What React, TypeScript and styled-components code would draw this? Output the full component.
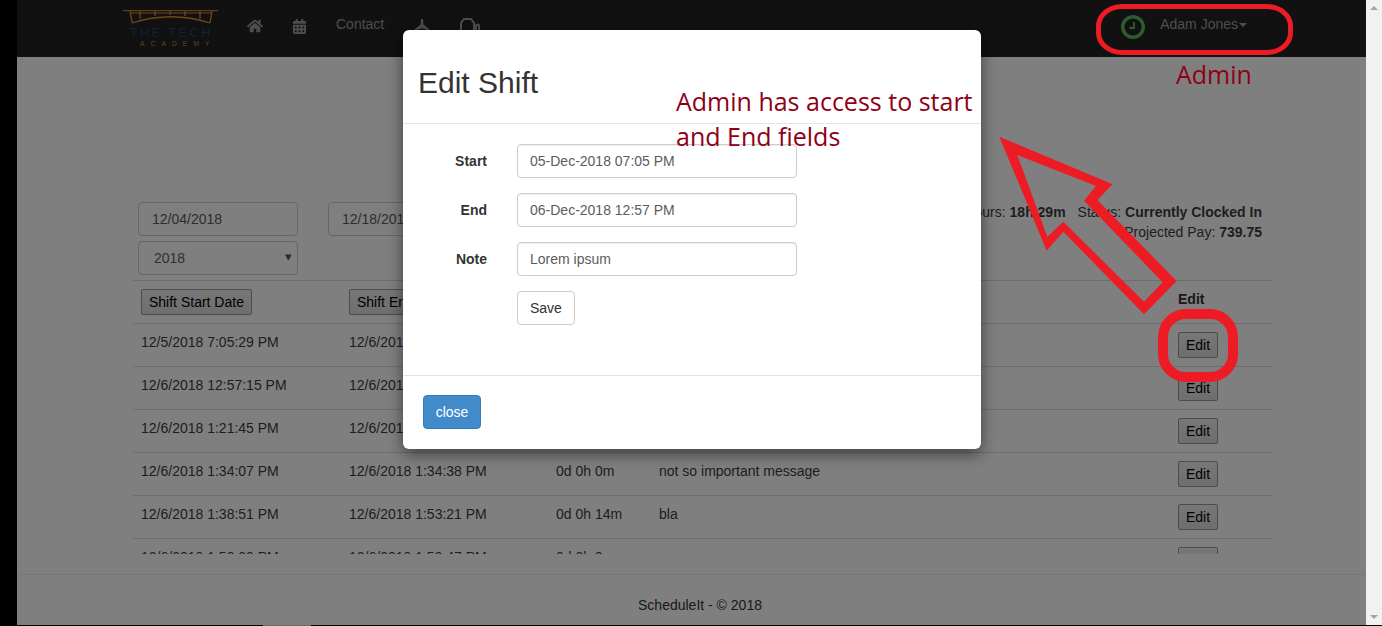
import React from 'react';
import styled, { createGlobalStyle } from 'styled-components';
import { FaHome, FaCalendarAlt } from 'react-icons/fa';

const GlobalStyle = createGlobalStyle`
  html, body {
    margin: 0;
    height: 626px;
    overflow: hidden;
    background: #000;
    font-family: "Liberation Sans", Arial, sans-serif;
    font-size: 14px;
    line-height: 20px;
    color: #333;
  }
  * { box-sizing: border-box; }
`;

const Shell = styled.div`
  display: flex;
  height: 625px;
  padding-left: 17px;
`;

const Page = styled.div`
  position: relative;
  flex: 1;
  display: flex;
  flex-direction: column;
  background: #fff;
  overflow: hidden;
`;

const Scrollbar = styled.div`
  width: 16px;
  display: flex;
  flex-direction: column;
  justify-content: space-between;
  align-items: center;
  padding: 6px 0;
  background: #f1f1f1;
`;

const ScrollArrow = styled.span<{ $down?: boolean }>`
  width: 0;
  height: 0;
  border-left: 4px solid transparent;
  border-right: 4px solid transparent;
  border-bottom: ${p => (p.$down ? '0' : '4px solid #a3a3a3')};
  border-top: ${p => (p.$down ? '4px solid #a3a3a3' : '0')};
`;

const BottomSliver = styled.div`
  position: absolute;
  left: 263px;
  top: 625px;
  width: 48px;
  height: 1px;
  background: #6b6b6b;
`;

const Navbar = styled.nav`
  height: 57px;
  flex: none;
  display: flex;
  align-items: flex-start;
  padding-left: 106px;
  background: #222;
  color: #9d9d9d;
`;

const Logo = styled.svg`
  width: 95px;
  height: 38px;
  margin: 10px 14px 0 0;
  flex: none;
`;

const NavLink = styled.a`
  display: flex;
  align-items: center;
  height: 20px;
  margin-top: 16px;
  padding: 0 15px;
  color: #9d9d9d;
`;

const CalendarLink = styled(NavLink)`
  padding: 0 14px;
`;

const NavText = styled(NavLink)`
  margin-top: 14px;
`;

const UserMenu = styled.div`
  display: flex;
  align-items: flex-start;
  margin-left: auto;
  padding: 14px 119px 0 0;
`;

const ClockIcon = styled.svg`
  width: 24px;
  height: 24px;
  margin: 1px 15px 0 0;
`;

const Caret = styled.span`
  display: inline-block;
  margin-left: 1px;
  vertical-align: middle;
  border-top: 4px solid #9d9d9d;
  border-left: 4px solid transparent;
  border-right: 4px solid transparent;
`;

const Main = styled.main`
  flex: 1;
  padding: 145px 93px 0 116px;
`;

const FilterBar = styled.div`
  display: flex;
  justify-content: space-between;
  height: 78px;
  padding: 0 11px 0 5px;
`;

const DateGrid = styled.div`
  display: grid;
  grid-template-columns: 160px 160px;
  grid-auto-rows: 34px;
  column-gap: 30px;
  row-gap: 5px;
`;

const DateInput = styled.input`
  width: 100%;
  height: 34px;
  padding: 6px 13px;
  border: 1px solid #ccc;
  border-radius: 4px;
  background: #fff;
  font: inherit;
  color: #5c5c5c;
`;

const SelectWrap = styled.div`
  position: relative;

  &::after {
    content: '▾';
    position: absolute;
    right: 6px;
    top: 6px;
    font-size: 13px;
    color: #555;
  }
`;

const YearSelect = styled.select`
  width: 100%;
  height: 34px;
  padding: 6px 15px;
  border: 1px solid #ccc;
  border-radius: 4px;
  background: #fff;
  font: inherit;
  color: #5c5c5c;
  appearance: none;
`;

const Stats = styled.div`
  text-align: right;
  color: #3d3d3d;
`;

const StatItem = styled.span`
  margin-left: 12px;
`;

const TableClip = styled.div`
  height: 274px;
  overflow: hidden;
`;

const ShiftTable = styled.table`
  width: 1140px;
  table-layout: fixed;
  border-collapse: collapse;
`;

const HeadCell = styled.th`
  padding: 8px;
  border-top: 1px solid #ddd;
  text-align: left;
  vertical-align: top;
`;

const Cell = styled.td`
  height: 43px;
  padding: 8px;
  border-top: 1px solid #ddd;
  vertical-align: top;
  color: #3d3d3d;
`;

const TableButton = styled.button`
  display: block;
  height: 26px;
  padding: 1px 7px;
  border: 1px solid #999;
  border-radius: 2px;
  background: linear-gradient(#efefef, #dcdcdc);
  font: inherit;
  font-weight: 400;
  color: #000;
  white-space: nowrap;
`;

const Footer = styled.footer`
  flex: none;
  height: 51px;
  padding: 20px 0 0 17px;
  border-top: 1px solid #eee;
  text-align: center;
`;

const Backdrop = styled.div`
  position: absolute;
  inset: 0;
  background: rgba(0, 0, 0, 0.5);
`;

const Modal = styled.div`
  position: absolute;
  left: 386px;
  top: 30px;
  width: 578px;
  height: 419px;
  background: #fff;
  border-radius: 6px;
  box-shadow: 0 5px 15px rgba(0, 0, 0, 0.5);
`;

const ModalHeader = styled.div`
  padding: 36px 15px 24px;
  border-bottom: 1px solid #e5e5e5;
`;

const ModalTitle = styled.h4`
  margin: 0;
  font-size: 30px;
  font-weight: 400;
  line-height: 33px;
`;

const ModalBody = styled.form`
  display: grid;
  grid-template-columns: 69px 280px;
  grid-auto-rows: 34px;
  column-gap: 30px;
  row-gap: 15px;
  padding: 20px 15px 50px;
`;

const FieldLabel = styled.label`
  font-weight: 700;
  line-height: 34px;
  text-align: right;
`;

const FieldInput = styled.input`
  width: 100%;
  height: 34px;
  padding: 6px 12px;
  border: 1px solid #ccc;
  border-radius: 4px;
  box-shadow: inset 0 1px 1px rgba(0, 0, 0, 0.075);
  font: inherit;
  color: #5c5c5c;
`;

const SaveButton = styled.button`
  grid-column: 2;
  justify-self: start;
  height: 34px;
  padding: 6px 12px;
  border: 1px solid #ccc;
  border-radius: 4px;
  background: #fff;
  font: inherit;
  color: #333;
`;

const ModalFooter = styled.div`
  padding: 19px 20px 20px;
  border-top: 1px solid #e5e5e5;
`;

const CloseButton = styled.button`
  display: block;
  width: 58px;
  height: 34px;
  padding: 0;
  border: 1px solid #357ebd;
  border-radius: 4px;
  background: #428bca;
  font: inherit;
  color: #fff;
`;

const Note = styled.div`
  position: absolute;
  font-family: "Open Sans", "Noto Sans", sans-serif;
  font-size: 25px;
  line-height: 35px;
  color: #8f0016;
  white-space: nowrap;
`;

const AdminNote = styled(Note)`
  left: 1159px;
  top: 57px;
`;

const AccessNote = styled(Note)`
  left: 659px;
  top: 84px;
`;

const UserRing = styled.div`
  position: absolute;
  left: 1079px;
  top: 4px;
  width: 197px;
  height: 51px;
  border: 5px solid #ed1c24;
  border-radius: 26px / 22px;
`;

const EditRing = styled.div`
  position: absolute;
  left: 1141px;
  top: 309px;
  width: 80px;
  height: 73px;
  border: 10px solid #ed1c24;
  border-radius: 28px;
`;

const Arrow = styled.svg`
  position: absolute;
  left: 973px;
  top: 130px;
  width: 190px;
  height: 190px;
`;

const shifts = [
  ['12/5/2018 7:05:29 PM', '12/6/2018 12:57:15 PM', '0d 17h 51m', 'important message'],
  ['12/6/2018 12:57:15 PM', '12/6/2018 1:21:45 PM', '0d 0h 24m', 'message'],
  ['12/6/2018 1:21:45 PM', '12/6/2018 1:34:07 PM', '0d 0h 12m', 'message'],
  ['12/6/2018 1:34:07 PM', '12/6/2018 1:34:38 PM', '0d 0h 0m', 'not so important message'],
  ['12/6/2018 1:38:51 PM', '12/6/2018 1:53:21 PM', '0d 0h 14m', 'bla'],
  ['12/6/2018 1:50:00 PM', '12/6/2018 1:59:47 PM', '0d 0h 9m', ''],
];

const App: React.FC = () => {
  return (
    <>
      <GlobalStyle />
      <Shell>
        <Page>
          <Navbar>
            <Logo viewBox="0 0 95 38">
              <g fill="none" stroke="#d8922a" strokeWidth="1.300">
                <path d="M0 .7H95M7 3H89" strokeWidth="1" />
                <path d="M7 1L9.300 13M89 1L87 13" />
                <path d="M9 13Q48 .5 87 13" />
                <path d="M17 1V9M32 1V6M47 1V5M62 1V6M77 1V9" />
              </g>
              <text x="7" y="26.500" fontFamily="Liberation Sans" fontSize="12.500" letterSpacing="2.600" fill="#15466e">THE TECH</text>
              <text x="17" y="36" fontFamily="Liberation Sans" fontSize="6.500" letterSpacing="6.200" fill="#c98a2a">ACADEMY</text>
            </Logo>
            <NavLink><FaHome size={16} /></NavLink>
            <CalendarLink><FaCalendarAlt size={15} /></CalendarLink>
            <NavText>Contact</NavText>
            <NavLink>
              <svg width="16" height="16" viewBox="0 0 16 16" fill="#9d9d9d">
                <path d="M7 1h2l.4 5.500L15 11v1.500L9 10.500 7 10.500 1 12.500V11l5.600-4.500z" />
              </svg>
            </NavLink>
            <NavLink>
              <svg width="20" height="16" viewBox="0 0 20 16" fill="none" stroke="#9d9d9d" strokeWidth="2">
                <path d="M1 14V5l3-4h7l3 4v9H1zM16 14V8a1.500 1.500 0 013 0v6" />
              </svg>
            </NavLink>
            <UserMenu>
              <ClockIcon viewBox="0 0 24 24" fill="none" stroke="#5cb85c" strokeWidth="3.400">
                <circle cx="12" cy="12" r="10.300" />
                <path d="M13 7v6H8.500" strokeWidth="1.800" />
              </ClockIcon>
              <span>Adam Jones<Caret /></span>
            </UserMenu>
          </Navbar>

          <Main>
            <FilterBar>
              <DateGrid>
                <DateInput defaultValue="12/04/2018" />
                <DateInput defaultValue="12/18/2018" />
                <SelectWrap>
                  <YearSelect defaultValue="2018">
                    <option>2018</option>
                  </YearSelect>
                </SelectWrap>
              </DateGrid>
              <Stats>
                <div>
                  Total Hours: <b>18h 29m</b>
                  <StatItem>Status: <b>Currently Clocked In</b></StatItem>
                </div>
                <div>Projected Pay: <b>739.75</b></div>
              </Stats>
            </FilterBar>
            <TableClip>
              <ShiftTable>
                <colgroup>
                  <col width="208" />
                  <col width="207" />
                  <col width="103" />
                  <col width="519" />
                  <col width="103" />
                </colgroup>
                <thead>
                  <tr>
                    <HeadCell><TableButton>Shift Start Date</TableButton></HeadCell>
                    <HeadCell><TableButton>Shift End Date</TableButton></HeadCell>
                    <HeadCell>Total</HeadCell>
                    <HeadCell>Note</HeadCell>
                    <HeadCell>Edit</HeadCell>
                  </tr>
                </thead>
                <tbody>
                  {shifts.map(shift => (
                    <tr key={shift[0]}>
                      {shift.map((value, i) => (
                        <Cell key={i}>{value}</Cell>
                      ))}
                      <Cell><TableButton>Edit</TableButton></Cell>
                    </tr>
                  ))}
                </tbody>
              </ShiftTable>
            </TableClip>
          </Main>

          <Footer>ScheduleIt - © 2018</Footer>

          <Backdrop />

          <Modal>
            <ModalHeader>
              <ModalTitle>Edit Shift</ModalTitle>
            </ModalHeader>
            <ModalBody>
              <FieldLabel>Start</FieldLabel>
              <FieldInput defaultValue="05-Dec-2018 07:05 PM" />
              <FieldLabel>End</FieldLabel>
              <FieldInput defaultValue="06-Dec-2018 12:57 PM" />
              <FieldLabel>Note</FieldLabel>
              <FieldInput defaultValue="Lorem ipsum" />
              <SaveButton type="button">Save</SaveButton>
            </ModalBody>
            <ModalFooter>
              <CloseButton>close</CloseButton>
            </ModalFooter>
          </Modal>

          <UserRing />
          <AdminNote>Admin</AdminNote>
          <AccessNote>
            Admin has access to start
            <br />
            and End fields
          </AccessNote>
          <Arrow viewBox="0 0 190 190">
            <path
              fill="#ed1c24"
              fillRule="evenodd"
              d="M9.300 6.700L122.700 54.300 107.300 70 186.700 151 154 184.300 73.300 101.700 56.700 120.700ZM27.300 25L57.300 106.700 73.300 91.700 154 171.700 172.700 152.300 94 70.700 106 56Z"
            />
          </Arrow>
          <EditRing />
        </Page>
        <Scrollbar>
          <ScrollArrow />
          <ScrollArrow $down />
        </Scrollbar>
      </Shell>
      <BottomSliver />
    </>
  );
};

export default App;
